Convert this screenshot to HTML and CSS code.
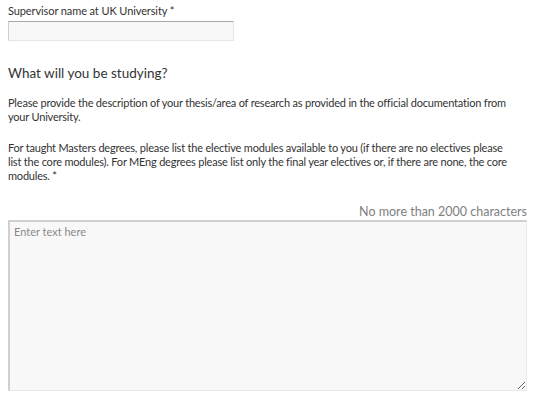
FILE: index.html
```html
<!DOCTYPE html>
<html>
<head>
<meta charset="utf-8">
<link rel="stylesheet" href="styles.css">
</head>
<body>
<div class="form">
  <label class="label" for="sup">Supervisor name at UK University *</label>
  <input class="text-input" id="sup" type="text">
  <h2 class="heading">What will you be studying?</h2>
  <p class="para p1">Please provide the description of your thesis/area of research as provided in the official documentation from your University.</p>
  <p class="para p2">For taught Masters degrees, please list the elective modules available to you (if there are no electives please list the core modules). For MEng degrees please list only the final year electives or, if there are none, the core modules. *</p>
  <div class="counter">No more than 2000 characters</div>
  <textarea class="textarea" placeholder="Enter text here"></textarea>
</div>
</body>
</html>
```
FILE: styles.css
```css
html, body {
  margin: 0;
  padding: 0;
  background: #ffffff;
}
body {
  font-family: Lato, "Liberation Sans", sans-serif;
  color: #333333;
}
.form {
  display: flex;
  flex-direction: column;
  align-items: flex-start;
  width: 519px;
  padding: 4px 0 0 8px;
}
.label {
  font-size: 11px;
  line-height: 14px;
  letter-spacing: -0.1px;
  display: block;
}
.text-input {
  margin: 3px 0 0 0;
  box-sizing: border-box;
  width: 226px;
  height: 20px;
  border: 1px solid #e6e6e6;
  border-top-color: #a8a8a8;
  border-left-color: #cfcfcf;
  background: #f8f8f8;
  padding: 0 4px;
  outline: none;
}
.heading {
  margin: 23px 0 0 0;
  font-size: 13.5px;
  line-height: 18px;
  font-weight: normal;
}
.para {
  margin: 0;
  font-size: 11px;
  line-height: 14px;
  letter-spacing: -0.2px;
}
.p1 { margin-top: 14px; max-width: 506px; }
.p2 { margin-top: 17px; max-width: 500px; }
.counter {
  align-self: stretch;
  text-align: right;
  margin-top: 22px;
  font-size: 12.5px;
  line-height: 14px;
  color: #808080;
}
.textarea {
  margin: 1px 0 0 0;
  box-sizing: border-box;
  width: 519px;
  height: 171px;
  border: 1px solid #e8e8e8;
  border-top: 2px solid #d0d0d0;
  border-left: 2px solid #d0d0d0;
  background: #f8f8f8;
  padding: 3px 4px;
  font-family: Lato, "Liberation Sans", sans-serif;
  font-size: 11px;
  line-height: 14px;
  color: #333;
  outline: none;
}
.textarea::placeholder {
  color: #8a8a8a;
}
```
